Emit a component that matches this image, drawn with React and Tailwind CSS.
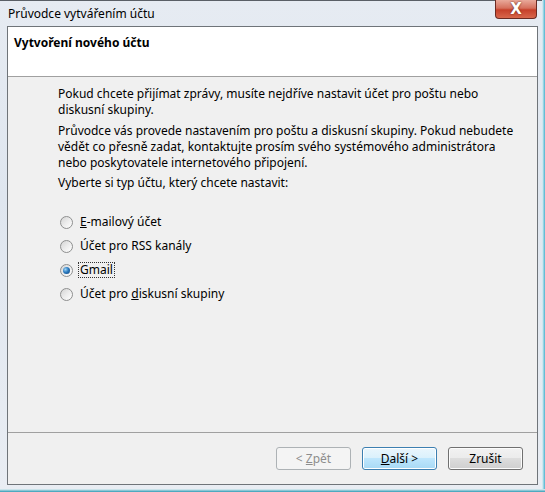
import { useState } from "react";

const font = { fontFamily: '"Noto Sans", "Open Sans", sans-serif' };

function Radio({ checked, children, focused, onClick }) {
  return (
    <div className="flex items-center h-[24px] cursor-default" onClick={onClick}>
      <span className="relative w-[13px] h-[13px] rounded-full border border-[#8e8f8f] bg-gradient-to-br from-[#d4d4d4] via-[#ececec] to-white flex items-center justify-center">
        {checked && (
          <span className="w-[7px] h-[7px] rounded-full bg-[radial-gradient(circle_at_35%_35%,#9fd4f5_0%,#2b7bc0_45%,#0b3f78_100%)]" />
        )}
      </span>
      <span
        className={
          "ml-[5px] px-[1px] leading-[14px] " +
          (focused ? "border border-dotted border-[#333]" : "border border-transparent")
        }
      >
        {children}
      </span>
    </div>
  );
}

function Button({ children, variant }) {
  const base = "w-[75px] h-[23px] rounded-[3px] border text-[12px] flex items-center justify-center";
  const cls =
    variant === "disabled"
      ? "border-[#adb2b5] bg-[#f4f4f4] text-[#8d8d8d]"
      : variant === "default"
      ? "border-[#3c7fb1] bg-[linear-gradient(#eaf6fd_0%,#d9f0fc_50%,#bee6fd_50%,#a7d9f5_100%)] text-black shadow-[inset_0_0_0_1px_#fff]"
      : "border-[#707070] bg-[linear-gradient(#f2f2f2_0%,#ebebeb_50%,#dddddd_50%,#cfcfcf_100%)] text-black shadow-[inset_0_0_0_1px_#fcfcfc]";
  return (
    <div className={base + " " + cls}>
      <span className="whitespace-pre">{children}</span>
    </div>
  );
}

export default function App() {
  const [choice, setChoice] = useState(2);
  const options = [
    <><u>E</u>-mailový účet</>,
    <>Účet pro RSS kanály</>,
    <>Gmail</>,
    <>Účet pro <u>d</u>iskusní skupiny</>,
  ];

  return (
    <div
      className="w-[545px] h-[492px] relative flex flex-col bg-[linear-gradient(#e6ebf2,#dfe6ef_40%,#e9edf3)] text-[12px] text-black overflow-hidden"
      style={font}
    >
      <div className="absolute top-0 left-0 right-0 h-px bg-[#5a5f66]" />
      <div className="absolute top-0 bottom-0 right-0 w-[3px] bg-[linear-gradient(90deg,#e8f3f7,#4bb3cf)]" />
      <div className="absolute left-0 right-0 bottom-0 h-[3px] bg-[linear-gradient(#e9f1f4,#2e9bb5)]" />

      {/* close button */}
      <div className="absolute top-0 right-[8px] w-[42px] h-[19px] rounded-b-[4px] border border-t-0 border-[#6b2a22] bg-[linear-gradient(#e9a99a_0%,#d5705d_45%,#c6402a_55%,#d8674c_100%)] flex items-center justify-center">
        <span className="text-white font-bold text-[15px] leading-none [text-shadow:0_0_2px_#5a1d14]" style={{ fontFamily: '"DejaVu Sans", sans-serif' }}>
          X
        </span>
      </div>

      <div className="h-[26px] flex items-center pl-[8px] pt-[1px] text-[12px] text-black">
        Průvodce vytvářením účtu
      </div>

      <div className="ml-[7px] w-[531px] h-[459px] border border-[#6f7479] bg-[#f0f0f0] flex flex-col">
        <div className="h-[50px] bg-white border-b border-[#a0a0a0] pl-[6px] pt-[8px] font-bold leading-[16px]">
          Vytvoření nového účtu
        </div>

        <div className="flex-1 pl-[50px] pt-[9px] leading-[16px]">
          <p>
            Pokud chcete přijímat zprávy, musíte nejdříve nastavit účet pro poštu nebo
            <br />
            diskusní skupiny.
          </p>
          <p className="mt-[5px]">
            Průvodce vás provede nastavením pro poštu a diskusní skupiny. Pokud nebudete
            <br />
            vědět co přesně zadat, kontaktujte prosím svého systémového administrátora
            <br />
            nebo poskytovatele internetového připojení.
          </p>
          <p className="mt-[4px]">Vyberte si typ účtu, který chcete nastavit:</p>

          <div className="mt-[19px] pl-[2px]">
            {options.map((o, i) => (
              <Radio key={i} checked={choice === i} focused={choice === i} onClick={() => setChoice(i)}>
                {o}
              </Radio>
            ))}
          </div>
        </div>

        <div className="h-[52px] border-t border-[#a0a0a0] flex justify-end items-start gap-[11px] pt-[14px] pr-[14px]">
          <Button variant="disabled">
            {"< "}
            <u>Z</u>pět
          </Button>
          <Button variant="default">
            <u>D</u>alší {">"}
          </Button>
          <Button>Zrušit</Button>
        </div>
      </div>
    </div>
  );
}
